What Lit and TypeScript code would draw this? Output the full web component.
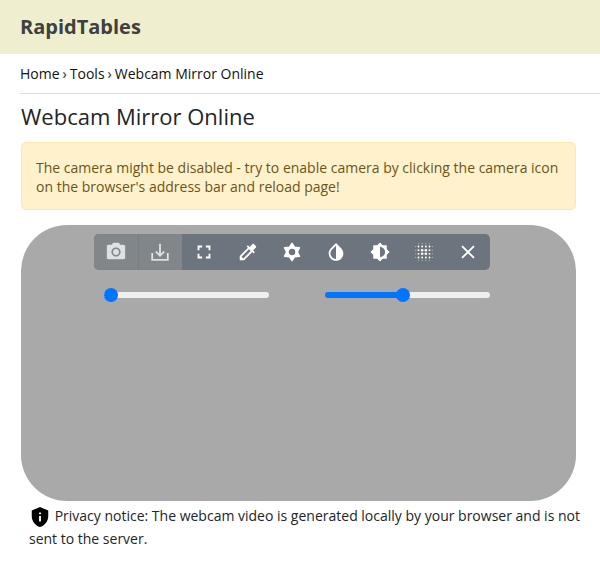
import { LitElement, html, css, svg } from "lit";
import { customElement, state } from "lit/decorators.js";
import { styleMap } from "lit/directives/style-map.js";

const dotColumns = [
  { at: 3, r: 0.5 },
  { at: 6, r: 1 },
  { at: 10, r: 1.4 },
  { at: 14, r: 1.4 },
  { at: 18, r: 1 },
  { at: 21, r: 0.5 },
];

const icons = {
  camera: svg`<circle cx="12" cy="12" r="3.2"/><path d="M9 2 7.170 4H4c-1.100 0-2 .9-2 2v12c0 1.100.9 2 2 2h16c1.100 0 2-.9 2-2V6c0-1.100-.9-2-2-2h-3.170L15 2H9zm3 15c-2.760 0-5-2.240-5-5s2.240-5 5-5 5 2.240 5 5-2.240 5-5 5z"/>`,
  download: svg`<path fill="none" stroke="currentColor" stroke-width="2" d="M3.500 13v7.500h17V13M12 3v12.500M7.500 11.500l4.500 4.500 4.500-4.500"/>`,
  fullscreen: svg`<path d="M7 14H5v5h5v-2H7v-3zm-2-4h2V7h3V5H5v5zm12 7h-3v2h5v-5h-2v3zM14 5v2h3v3h2V5h-5z"/>`,
  picker: svg`<path d="M20.710 5.630l-2.340-2.340c-.39-.39-1.020-.39-1.410 0l-3.120 3.120-1.930-1.910-1.410 1.410 1.420 1.420L3 16.250V21h4.750l8.920-8.920 1.420 1.420 1.410-1.410-1.920-1.920 3.120-3.120c.4-.4.4-1.030.01-1.420zM6.920 19L5 17.080l8.060-8.060 1.920 1.920L6.920 19z"/>`,
  gear: svg`<path fill-rule="evenodd" stroke="currentColor" stroke-width="1.600" stroke-linejoin="round" d="M12 2.600L14.700 6.700 20.200 7.300 17.800 12 20.200 16.700 14.700 17.300 12 21.400 9.300 17.300 3.800 16.700 6.200 12 3.800 7.300 9.300 6.700zM12 7.600a4.400 4.400 0 100 8.800 4.400 4.400 0 000-8.800z"/>`,
  drop: svg`<path d="M17.660 7.930L12 2.270 6.340 7.930c-3.120 3.120-3.120 8.190 0 11.310C7.900 20.800 9.950 21.580 12 21.580s4.100-.78 5.660-2.340c3.120-3.120 3.120-8.190 0-11.310zM12 19.590c-1.600 0-3.110-.62-4.240-1.760C6.620 16.690 6 15.190 6 13.590s.62-3.110 1.760-4.240L12 5.100v14.490z"/>`,
  contrast: svg`<path d="M20 15.310L23.310 12 20 8.690V4h-4.690L12 .69 8.690 4H4v4.690L.69 12 4 15.310V20h4.690L12 23.310 15.310 20H20v-4.690zM12 18V6c3.310 0 6 2.690 6 6s-2.690 6-6 6z"/>`,
  close: svg`<path fill="none" stroke="currentColor" stroke-width="2" d="M5.500 5.500l13 13m0-13l-13 13"/>`,
  blur: dotColumns.flatMap((row) =>
    dotColumns
      .filter((col) => Math.max(row.r, col.r) > 0.5)
      .map((col) => svg`<circle cx=${col.at} cy=${row.at} r=${Math.min(row.r, col.r)}/>`)
  ),
};

const tools = [
  { label: "Take photo", icon: icons.camera, disabled: true },
  { label: "Download", icon: icons.download, disabled: true },
  { label: "Full screen", icon: icons.fullscreen },
  { label: "Pick color", icon: icons.picker },
  { label: "Settings", icon: icons.gear },
  { label: "Invert", icon: icons.drop },
  { label: "Brightness", icon: icons.contrast, viewBox: "-1 -1 26 26" },
  { label: "Blur", icon: icons.blur },
  { label: "Close", icon: icons.close },
];

@customElement("app-root")
export class AppRoot extends LitElement {
  @state() private zoom = 0;
  @state() private brightness = 47;

  static styles = css`
    :host {
      display: block;
      font-family: "Segoe UI", "Open Sans", "Noto Sans", sans-serif;
      font-size: 14px;
      line-height: 20px;
      color: #212529;
      background: #fff;
    }
    header {
      padding: 12px 20px;
      background: #efefd0;
    }
    .brand {
      font-size: 20px;
      font-weight: 700;
      line-height: 30px;
      color: #404040;
      text-decoration: none;
    }
    nav {
      display: flex;
      gap: 3px;
      margin-left: 20px;
      padding: 10px 0 9px;
      border-bottom: 1px solid #dcdcdc;
    }
    nav a {
      color: #111;
      text-decoration: none;
    }
    main {
      padding: 8px 24px 20px 21px;
    }
    h1 {
      margin: 0 0 12px;
      font-size: 22px;
      font-weight: 400;
      line-height: 28px;
    }
    .alert {
      margin-bottom: 15px;
      padding: 15px 14px 13px;
      border: 1px solid #ffe8ab;
      border-radius: 5px;
      background: #fff1cc;
      color: #6b5516;
      line-height: 19px;
    }
    .alert p {
      margin: 0;
    }
    .stage {
      min-height: 258px;
      padding: 9px 13px 9px 0;
      border-radius: 46px;
      background: #a9a9a9;
    }
    .panel {
      width: 396px;
      max-width: 100%;
      margin: 0 auto;
    }
    .toolbar {
      display: flex;
      overflow: hidden;
      border-radius: 5px;
      background: #6c757d;
    }
    .tool {
      display: flex;
      flex: 1;
      align-items: center;
      justify-content: center;
      height: 36px;
      padding: 0;
      border: 0;
      background: none;
      color: #fff;
    }
    .tool:disabled {
      background: #81868b;
      color: #dfe0e2;
    }
    .tool:disabled + .tool:disabled {
      box-shadow: inset 1px 0 #757c82;
    }
    svg {
      display: block;
      width: 22px;
      height: 22px;
      fill: currentColor;
    }
    .sliders {
      display: flex;
      justify-content: space-between;
      padding: 18px 0 0 10px;
    }
    .slider {
      width: 165px;
      height: 14px;
      margin: 0;
      appearance: none;
      background: none;
    }
    .slider::-webkit-slider-runnable-track {
      height: 6px;
      border-radius: 3px;
      background: linear-gradient(#0075ff, #0075ff) 0 0 / var(--fill) 100% no-repeat #efefef;
    }
    .slider::-webkit-slider-thumb {
      width: 14px;
      height: 14px;
      margin-top: -4px;
      appearance: none;
      border-radius: 50%;
      background: #0075ff;
    }
    .notice {
      margin: 4px -12px 0 0;
      padding-left: 8px;
      line-height: 22px;
    }
    .notice svg {
      display: inline-block;
      vertical-align: middle;
      fill: #000;
    }
  `;

  private slider(label: string, value: number, change: (v: number) => void) {
    return html`<input
      class="slider"
      type="range"
      aria-label=${label}
      style=${styleMap({ "--fill": `${value}%` })}
      .value=${String(value)}
      @input=${(e: Event) => change(Number((e.target as HTMLInputElement).value))}
    />`;
  }

  render() {
    return html`
      <header><a class="brand" href="#">RapidTables</a></header>
      <nav aria-label="Breadcrumb">
        <a href="#">Home</a><span>›</span><a href="#">Tools</a><span>›</span><a href="#">Webcam Mirror Online</a>
      </nav>
      <main>
        <h1>Webcam Mirror Online</h1>
        <div class="alert" role="alert">
          <p>The camera might be disabled - try to enable camera by clicking the camera icon on the browser's address bar and reload page!</p>
        </div>
        <section class="stage">
          <div class="panel">
            <div class="toolbar" role="toolbar">
              ${tools.map((t) => html`<button class="tool" aria-label=${t.label} ?disabled=${!!t.disabled}>
                <svg viewBox=${t.viewBox ?? "0 0 24 24"} aria-hidden="true">${t.icon}</svg>
              </button>`)}
            </div>
            <div class="sliders">
              ${this.slider("Zoom", this.zoom, (v) => (this.zoom = v))}
              ${this.slider("Brightness", this.brightness, (v) => (this.brightness = v))}
            </div>
          </div>
        </section>
        <p class="notice">
          <svg viewBox="0 0 24 24" aria-hidden="true"><path fill-rule="evenodd" d="M12 1L3 5v6c0 5.550 3.840 10.740 9 12 5.160-1.260 9-6.450 9-12V5l-9-4zm-1 6h2v2h-2V7zm0 4h2v6h-2v-6z"/></svg>
          Privacy notice: The webcam video is generated locally by your browser and is not sent to the server.
        </p>
      </main>
    `;
  }
}
